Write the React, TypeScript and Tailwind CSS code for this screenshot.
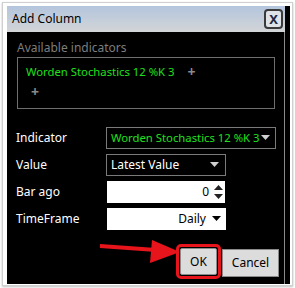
const font = { fontFamily: '"Noto Sans", "Open Sans", sans-serif' }

const Caret = () => (
  <svg width="9" height="6" viewBox="0 0 9 6" className="shrink-0">
    <path d="M0 0 L9 0 L4.5 5 Z" fill="currentColor" />
  </svg>
)

const Row = ({ label, children }: { label: string; children: React.ReactNode }) => (
  <div className="flex h-[22px] items-center">
    <div className="w-[99px] pl-[9px] text-[12px] text-white">{label}</div>
    {children}
  </div>
)

const App = () => {
  return (
    <div className="h-[288px] w-[295px] bg-white p-[2px]" style={font}>
      <div className="flex h-[284px] w-[291px] border border-[#cfcfcf] pt-[3px] pl-[4px] pr-[1px] pb-[1px] shadow-[0_1px_2px_rgba(0,0,0,0.25)]">
        <div className="flex w-[278px] flex-col">
          <div className="flex h-[26px] items-center justify-between bg-gradient-to-b from-[#b3c5dd] to-[#d3d5d7] pl-[5px] pr-[2px]">
            <span className="text-[12px] text-black">Add Column</span>
            <div className="flex h-[20px] w-[19px] items-center justify-center rounded-[4px] border-2 border-[#3a3a3a] bg-[#dfe3e8] text-[13px] font-bold leading-none text-[#1e2a44]">
              X
            </div>
          </div>
          <div className="relative flex flex-1 flex-col border-r border-[#8a8a8a] bg-black pt-[8px]">
            <div className="pl-[10px] text-[12px] leading-[16px] text-[#7d7d7d]">Available indicators</div>
            <div className="ml-[10px] mt-[1px] h-[52px] w-[258px] border border-[#6e6e6e] pl-[8px] pt-[5px]">
              <div className="flex items-center whitespace-nowrap text-[11.3px] leading-[18px] text-[#1ee01e]">
                Worden Stochastics 12 %K 3
                <span className="ml-[13px] text-[14px] font-bold text-[#8a8a8a]">+</span>
              </div>
              <div className="ml-[5px] mt-[2px] text-[14px] font-bold leading-[18px] text-[#8a8a8a]">+</div>
            </div>
            <div className="mt-[18px] flex flex-col gap-[5px]">
              <Row label="Indicator">
                <div className="flex h-[22px] w-[170px] items-center justify-between whitespace-nowrap border border-[#7a7a7a] pl-[4px] pr-[5px] text-[11.3px] text-[#1ee01e]">
                  <span>Worden Stochastics 12 %K 3</span>
                  <span className="text-[#d0d0d0]"><Caret /></span>
                </div>
              </Row>
              <Row label="Value">
                <div className="flex h-[22px] w-[120px] items-center justify-between border border-[#7a7a7a] pl-[4px] pr-[6px] text-[12px] text-white">
                  <span>Latest Value</span>
                  <span className="text-[#d0d0d0]"><Caret /></span>
                </div>
              </Row>
              <Row label="Bar ago">
                <div className="ml-[1px] flex h-[22px] w-[118px] items-center bg-white text-[12px] text-black">
                  <span className="flex-1 pr-[4px] text-right">0</span>
                  <div className="flex w-[12px] flex-col items-center gap-[3px] pr-[2px]">
                    <svg width="9" height="6" viewBox="0 0 9 6"><path d="M0 5 L9 5 L4.5 0 Z" fill="#222" /></svg>
                    <svg width="9" height="6" viewBox="0 0 9 6"><path d="M0 0 L9 0 L4.5 5 Z" fill="#222" /></svg>
                  </div>
                </div>
              </Row>
              <Row label="TimeFrame">
                <div className="ml-[1px] flex h-[22px] w-[119px] items-center justify-end gap-[6px] bg-white pr-[5px] text-[12px] text-black">
                  <span>Daily</span>
                  <Caret />
                </div>
              </Row>
            </div>
            <div className="mt-auto flex items-end justify-end gap-[1px] pb-[6px] pr-[5px]">
              <div className="mb-[-1px] rounded-[5px] border-[3px] border-[#e8141c] p-[1px]">
                <button className="h-[27px] w-[37px] rounded-[2px] border border-[#8a8a8a] bg-[#dcdcdc] text-[12px] text-black">
                  OK
                </button>
              </div>
              <button className="mb-[1px] h-[28px] w-[57px] border border-[#8a8a8a] bg-[#dcdcdc] text-[12px] text-black">
                Cancel
              </button>
            </div>
            <svg className="absolute left-[93px] top-[207px]" width="82" height="26" viewBox="0 0 82 26">
              <path d="M0 7 L56 11" stroke="#e8141c" strokeWidth="4" strokeLinecap="round" />
              <path d="M52 1 L80 13 L50 24 Z" fill="#e8141c" />
            </svg>
          </div>
        </div>
        <div className="w-[5px] bg-black" />
      </div>
    </div>
  )
}

export default App
